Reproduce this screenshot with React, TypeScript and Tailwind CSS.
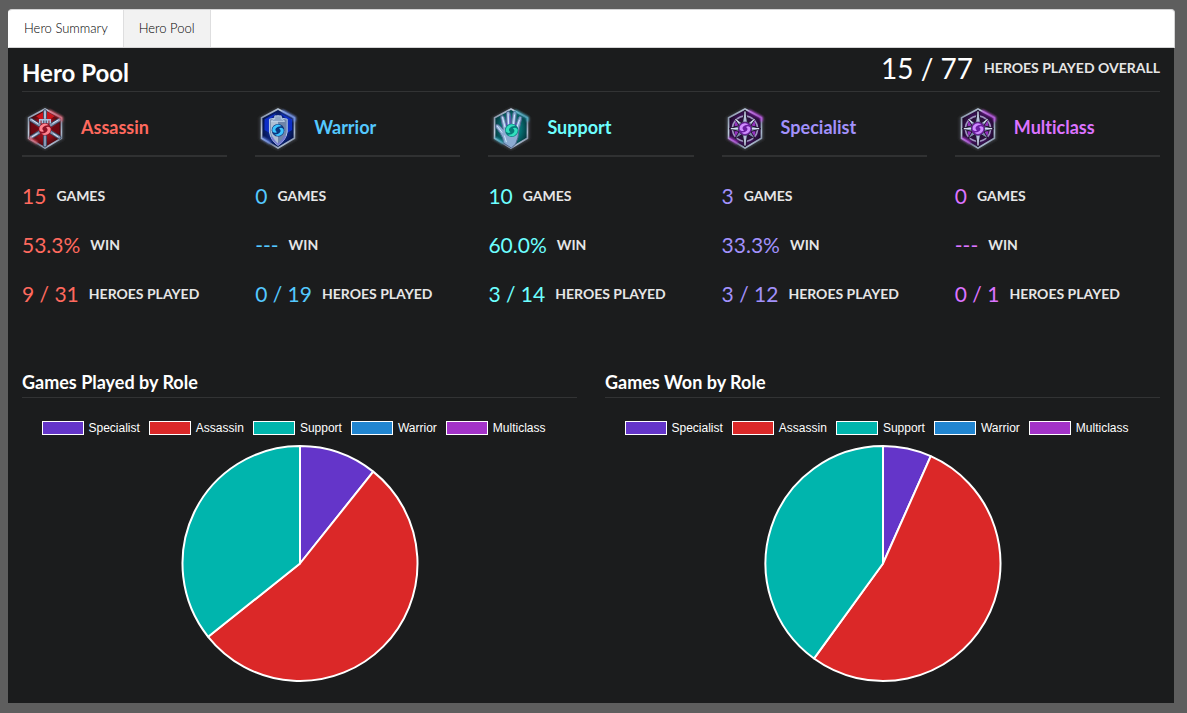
import { useState, type ReactNode } from "react";

type Role = {
  name: string;
  color: string;
  games: string;
  win: string;
  heroes: string;
  icon: ReactNode;
};

type Slice = { label: string; color: string; value: number };

function Emblem({ id, dark, mid, bright, glow, children }: { id: string; dark: string; mid: string; bright: string; glow: string; children: ReactNode }) {
  return (
    <svg viewBox="0 -2 140 140" className="size-[46px] shrink-0" aria-hidden="true">
      <defs>
        <linearGradient id={`${id}-steel`} x1="0" y1="0" x2="1" y2="1">
          <stop offset="0" stopColor="#6f7b90" />
          <stop offset="0.3" stopColor="#bccadb" />
          <stop offset="0.55" stopColor="#66728a" />
          <stop offset="0.8" stopColor="#a9b8cc" />
          <stop offset="1" stopColor="#5b657a" />
        </linearGradient>
        <radialGradient id={`${id}-fill`}>
          <stop offset="0" stopColor={bright} />
          <stop offset="0.6" stopColor={mid} />
          <stop offset="1" stopColor={dark} />
        </radialGradient>
        <filter id={`${id}-soft`} x="-30%" y="-30%" width="160%" height="160%">
          <feGaussianBlur stdDeviation="3" />
        </filter>
      </defs>
      <path d="M70 5 127 35v68l-57 33-57-33V35z" fill="#3a3c42" filter={`url(#${id}-soft)`} />
      <path d="M70 10 120 37v62l-50 30-50-30V37z" fill={`url(#${id}-fill)`} stroke={`url(#${id}-steel)`} strokeWidth="5" />
      {children}
      <path d="M82 15 120 36v12M21 97l26 17" fill="none" stroke={glow} strokeWidth="8" opacity="0.8" filter={`url(#${id}-soft)`} />
    </svg>
  );
}

function Swirl({ x, y, r, color, core }: { x: number; y: number; r: number; color: string; core: string }) {
  return (
    <g transform={`translate(${x} ${y}) scale(${r / 16})`}>
      <circle r="17" fill={core} />
      <g fill={color}>
        <path d="M-15 3A15 15 0 0 1 10-11Q0-12-5-6T-3 5Q-9 9-15 3z" />
        <path d="M15-3A15 15 0 0 1-10 11Q0 12 5 6T3-5Q9-9 15-3z" />
      </g>
    </g>
  );
}

function AssassinIcon() {
  return (
    <Emblem id="assassin" dark="#3c070d" mid="#850e18" bright="#b91722" glow="#ff6474">
      <path d="M43 32 68 18v32zM99 32 75 18v32z" fill="#d3151c" opacity="0.9" />
      <path d="M28 53l27 17-27 17zM113 53 87 70l26 17z" fill="#6d0812" />
      <g stroke="#39445a" strokeWidth="12" strokeLinecap="round">
        <path d="M27 43 114 97M114 43 27 97M70 17v104" />
      </g>
      <g stroke="#8898b5" strokeWidth="7" strokeLinecap="round">
        <path d="M27 43 114 97M114 43 27 97M70 17v104" />
      </g>
      <path d="M54 54V43h32v11M62 43v11M78 43v11" fill="none" stroke="#acc0dc" strokeWidth="5" />
      <path d="M29 42l20 13M111 43 93 54M70 17v22M30 95l17-10M110 95 95 85" stroke="#d9e5f7" strokeWidth="3" />
      <Swirl x={70} y={72} r={18} color="#ff8490" core="#8e1024" />
    </Emblem>
  );
}

function WarriorIcon() {
  return (
    <Emblem id="warrior" dark="#041247" mid="#0b2685" bright="#1647b9" glow="#7095ff">
      <path d="M29 41 66 22 45 43v40l-16-9zM113 41 76 22l21 21v40l16-9z" fill="#0d2ec6" />
      <path d="M44 41q16 0 26-10 12 10 28 10v39q-4 26-28 41-22-15-26-41z" fill="#6e84a8" stroke="#b5cbe8" strokeWidth="3" />
      <path d="M70 35v83Q51 104 48 79V45q14-1 22-10z" fill="#aebfd4" />
      <path d="M60 40q-8 2-10 8h40q-2-6-10-8V31H60z" fill="#8da4c4" stroke="#d3e2f5" strokeWidth="2" />
      <path d="M51 95q10 18 20 23 14-9 21-26" fill="none" stroke="#7476d5" strokeWidth="6" opacity="0.8" />
      <Swirl x={70} y={75} r={18} color="#3cc4ff" core="#0c367e" />
    </Emblem>
  );
}

function SupportIcon() {
  return (
    <Emblem id="support" dark="#043c43" mid="#067174" bright="#0b9b92" glow="#3fb8cc">
      <path d="M48 114q-1-16-11-30L23 65q-2-8 5-8 5 0 18 15L39 37q-1-7 4-7t7 7l7 24-1-37q0-7 5-7t6 7l3 34 6-35q1-7 6-6t4 8l-3 37 10-25q3-6 7-4t2 8l-8 35q-1 22-10 41l-13 12z" fill="#8cabd2" stroke="#52668d" strokeWidth="3" strokeLinejoin="round" />
      <path d="M44 35l8 31M61 24l2 34M81 27l-4 33M96 43l-9 25M28 62l15 20M56 111l-6-20" fill="none" stroke="#d3e8ff" strokeWidth="3" />
      <path d="M67 30v26M56 52l3 13M86 52l-5 16" stroke="#5c43bb" strokeWidth="3" />
      <Swirl x={72} y={75} r={19} color="#31dfbd" core="#087c7b" />
    </Emblem>
  );
}

function CompassIcon({ id }: { id: string }) {
  return (
    <Emblem id={id} dark="#1d0a2b" mid="#491468" bright="#8b36b9" glow="#cf45f5">
      <circle cx="70" cy="70" r="38" fill="#2b0e3d" stroke="#9d96bd" strokeWidth="5" />
      <path d="M42 44l16 11-4 10-16-4zM98 44 82 55l4 10 16-4zM42 96l16-11-4-10-16 4zM98 96 82 85l4-10 16 4z" fill="#9433c0" />
      <path d="M70 13 79 52 102 38 88 61 118 70 88 79 102 102 79 88 70 126 61 88 38 102 52 79 22 70 52 61 38 38 61 52z" fill="#7e87a9" stroke="#21152d" strokeWidth="3" />
      <path d="M70 18v34M27 70h28M70 121V88M113 70H86M41 41l12 12M99 41 87 53" fill="none" stroke="#d5def0" strokeWidth="4" />
      <circle cx="70" cy="70" r="20" fill="#7a25ad" stroke="#492368" strokeWidth="3" />
      <Swirl x={70} y={70} r={17} color="#cf8bff" core="#6a1da1" />
    </Emblem>
  );
}

const roles: Role[] = [
  { name: "Assassin", color: "text-[#ff695e]", games: "15", win: "53.3%", heroes: "9 / 31", icon: <AssassinIcon /> },
  { name: "Warrior", color: "text-[#54c8ff]", games: "0", win: "---", heroes: "0 / 19", icon: <WarriorIcon /> },
  { name: "Support", color: "text-[#6dffff]", games: "10", win: "60.0%", heroes: "3 / 14", icon: <SupportIcon /> },
  { name: "Specialist", color: "text-[#a291fb]", games: "3", win: "33.3%", heroes: "3 / 12", icon: <CompassIcon id="specialist" /> },
  { name: "Multiclass", color: "text-[#dc73ff]", games: "0", win: "---", heroes: "0 / 1", icon: <CompassIcon id="multiclass" /> },
];

const played: Slice[] = [
  { label: "Specialist", color: "#6435c9", value: 3 },
  { label: "Assassin", color: "#db2828", value: 15 },
  { label: "Support", color: "#00b5ad", value: 10 },
  { label: "Warrior", color: "#2185d0", value: 0 },
  { label: "Multiclass", color: "#a333c8", value: 0 },
];

const wins = [1, 8, 6, 0, 0];
const won: Slice[] = played.map((slice, i) => ({ ...slice, value: wins[i] }));

function Stat({ value, label, color }: { value: string; label: string; color: string }) {
  return (
    <div className="flex h-[49px] items-center gap-[10px]">
      <dt className="text-[14px] leading-5 font-bold text-[#e6e6e6] uppercase">{label}</dt>
      <dd className={`order-first text-[21px] leading-[22px] ${color}`}>{value}</dd>
    </div>
  );
}

function RoleColumn({ role }: { role: Role }) {
  return (
    <section>
      <h3 className={`flex h-[65px] items-center gap-[13px] border-b-2 border-[#303132] pt-2 text-[18px] font-bold [font-variant-ligatures:none] ${role.color}`}>
        {role.icon}
        {role.name}
      </h3>
      <dl className="pt-[14px]">
        <Stat value={role.games} label="Games" color={role.color} />
        <Stat value={role.win} label="Win" color={role.color} />
        <Stat value={role.heroes} label="Heroes Played" color={role.color} />
      </dl>
    </section>
  );
}

function Pie({ title, slices }: { title: string; slices: Slice[] }) {
  const total = slices.reduce((sum, s) => sum + s.value, 0);
  const point = (n: number) => {
    const a = (n / total) * Math.PI * 2;
    return `${118 + 117.5 * Math.sin(a)} ${118.5 - 117.5 * Math.cos(a)}`;
  };
  let sum = 0;
  const arcs = slices
    .filter((s) => s.value > 0)
    .map((s) => {
      const start = sum;
      sum += s.value;
      return { ...s, d: `M118 118.5L${point(start)}A117.5 117.5 0 ${s.value / total > 0.5 ? 1 : 0} 1 ${point(sum)}Z` };
    });
  return (
    <section>
      <h3 className="border-b border-[#323334] pb-[3px] text-[18px] leading-6 font-bold">{title}</h3>
      <ul className="mt-[22px] flex flex-wrap justify-center gap-x-[9px] pr-3 font-['Liberation_Sans',Arial,sans-serif] text-[12px] leading-4 text-white">
        {slices.map((s) => (
          <li key={s.label} className="flex items-center gap-[5px]">
            <span className="h-[14px] w-[42px] border border-white" style={{ backgroundColor: s.color }} />
            {s.label}
          </li>
        ))}
      </ul>
      <svg viewBox="0 0 236 236" className="mx-auto mt-[9px] size-[236px] overflow-visible" role="img" aria-label={title}>
        {arcs.map((a) => (
          <path key={a.label} d={a.d} fill={a.color} stroke="#fff" strokeWidth="2" strokeLinejoin="bevel" />
        ))}
      </svg>
    </section>
  );
}

const tabs = ["Hero Summary", "Hero Pool"];

export default function App() {
  const [active, setActive] = useState("Hero Pool");
  return (
    <div className="min-h-screen bg-[#5e5e5e] pt-[9px] pr-3 pb-[10px] pl-2 font-[Lato,sans-serif] text-white">
      <nav className="flex h-[39px] overflow-hidden rounded-t border border-[#d4d4d5] border-l-white bg-white">
        {tabs.map((tab) => (
          <button
            key={tab}
            type="button"
            onClick={() => setActive(tab)}
            className={`border-r border-[#dededf] px-[15px] text-[13px] ${tab === active ? "bg-[#f2f2f2] text-black" : "text-black"} font-light`}
          >
            {tab}
          </button>
        ))}
      </nav>
      <main className="mr-px bg-[#1b1c1d] px-[14px] pb-[22px]">
        <header className="flex h-11 items-center justify-between border-b border-[#323334]">
          <h2 className="pt-[6px] text-[24px] leading-7 font-bold">Hero Pool</h2>
          <p className="flex items-center gap-[11px] pb-1">
            <span className="text-[28px] leading-8">15 / 77</span>
            <span className="text-[14px] font-bold text-[#e6e6e6] uppercase">Heroes Played Overall</span>
          </p>
        </header>
        <div className="grid grid-cols-5 gap-7">
          {roles.map((role) => (
            <RoleColumn key={role.name} role={role} />
          ))}
        </div>
        <div className="mt-[52px] grid grid-cols-2 gap-7">
          <Pie title="Games Played by Role" slices={played} />
          <Pie title="Games Won by Role" slices={won} />
        </div>
      </main>
    </div>
  );
}
